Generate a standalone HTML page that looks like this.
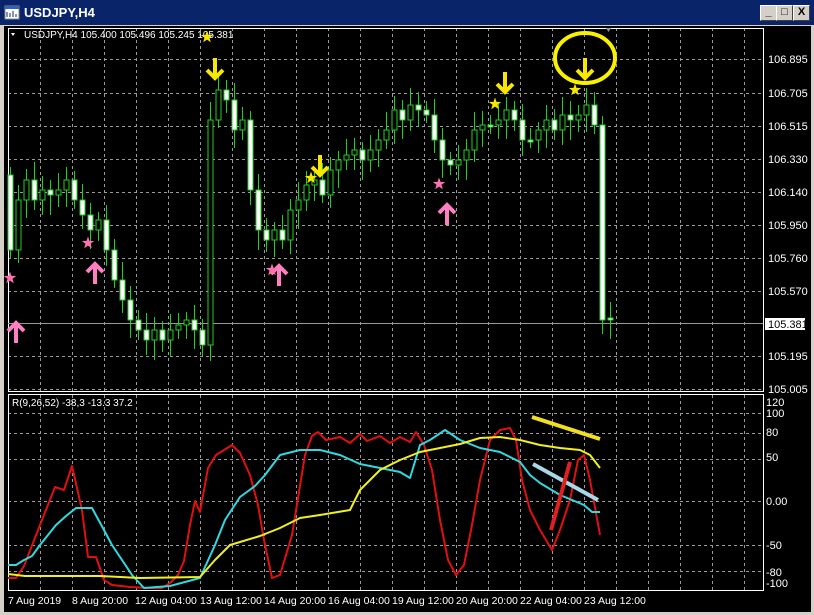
<!DOCTYPE html>
<html><head><meta charset="utf-8"><style>
body{margin:0;width:814px;height:615px;background:#d4d0c8;overflow:hidden;font-family:"Liberation Sans","DejaVu Sans",sans-serif}
#title{position:absolute;left:0;top:0;width:814px;height:25px;background:#0a246a;color:#fff;font-size:13px;font-weight:bold}
#title span{position:absolute;left:24px;top:5px}
.btn{position:absolute;top:5px;width:15px;height:14px;background:#d4d0c8;border:1px solid;border-color:#fff #404040 #404040 #fff;color:#000;font-size:11px;line-height:13px;text-align:center;font-weight:bold}
svg{position:absolute;left:0;top:0}
</style></head><body>
<div id="title"><svg width="18" height="16" style="left:4px;top:5px"><rect x="1" y="1" width="14" height="13" fill="#fff" stroke="#888"/><rect x="1" y="1" width="14" height="3" fill="#3060c0"/><path d="M3 12V7M6 12V8M9 12V6M12 12V9" stroke="#0a246a"/></svg><span>USDJPY,H4</span>
<div class="btn" style="left:760px">_</div><div class="btn" style="left:776px">□</div><div class="btn" style="left:793px">X</div></div>
<svg id="c" width="814" height="615">
<rect x="4" y="26" width="807" height="586" fill="#000"/>
<g id="grid" stroke="#9a9a9a" stroke-dasharray="3,3" stroke-width="1"></g>
<rect x="8.5" y="28.5" width="755" height="363" fill="none" stroke="#fff"/>
<rect x="8.5" y="394.5" width="755" height="196" fill="none" stroke="#fff"/>
<line x1="8" y1="323.5" x2="763" y2="323.5" stroke="#999"/>
<g id="cand"></g>
<g fill="#fff" font-size="11" font-family="Liberation Sans,sans-serif">
<text x="768" y="63">106.895</text><text x="768" y="97">106.705</text><text x="768" y="130">106.515</text><text x="768" y="163">106.330</text><text x="768" y="196">106.140</text><text x="768" y="229">105.950</text><text x="768" y="262">105.760</text><text x="768" y="295">105.570</text><text x="768" y="360">105.195</text><text x="768" y="393">105.005</text>
<rect x="765" y="318" width="40" height="12" fill="#fff"/><text x="768" y="328" fill="#000">105.381</text>
<text x="766" y="406">120</text><text x="766" y="417">100</text><text x="766" y="436">80</text><text x="766" y="461">50</text><text x="766" y="505">0.00</text><text x="766" y="549">-50</text><text x="766" y="576">-80</text><text x="766" y="587">-100</text>
<text x="24" y="38" font-size="10">USDJPY,H4  105.400 105.496 105.245 105.381</text>
<text x="12" y="406" font-size="10">R(9,26,52) -38,3 -13.3 37.2</text>
<g font-size="10.5">
<text x="8" y="604">7 Aug 2019</text><text x="72" y="604">8 Aug 20:00</text><text x="135" y="604">12 Aug 04:00</text><text x="200" y="604">13 Aug 12:00</text><text x="264" y="604">14 Aug 20:00</text><text x="328" y="604">16 Aug 04:00</text><text x="392" y="604">19 Aug 12:00</text><text x="456" y="604">20 Aug 20:00</text><text x="520" y="604">22 Aug 04:00</text><text x="584" y="604">23 Aug 12:00</text>
</g></g>
<path d="M11 33l4 0-2 3z" fill="#fff"/>
<path d="M606 28l5 0-2.5 4z" fill="#8899aa"/>
<g fill="none" stroke-width="2" stroke-linejoin="round">
<polyline stroke="#e01010" points="8,578 16,578 24,566 40,525 55,487 64,490 72,466 82,510 88,557 96,557 104,580 112,585 130,587 150,588 162,588 170,583 178,575 184,561 190,525 195,501 200,512 208,468 216,455 232,445 240,453 250,475 258,505 264,540 272,578 280,575 292,535 305,455 312,436 318,432 326,440 340,437 350,443 360,434 367,441 380,436 390,443 400,437 410,442 416,432 424,445 432,470 440,520 448,560 456,575 464,565 472,525 480,480 490,440 500,430 510,428 516,440 522,480 530,510 540,530 552,550 560,530 570,500 578,460 584,455 590,480 600,535"/>
<polyline stroke="#30d8e0" points="8,565 16,565 24,560 32,556 40,545 48,535 56,525 66,516 76,508 92,508 104,530 112,545 122,560 132,575 144,588 170,586 200,578 215,545 225,520 240,497 255,486 265,475 280,455 300,450 320,450 340,455 360,464 380,468 400,472 410,478 420,445 430,440 445,430 460,440 480,448 500,452 520,462 530,475 540,483 560,495 572,500 584,505 592,512 600,512"/>
<polyline stroke="#f0f020" points="8,574 25,576 100,576 140,578 200,577 215,560 230,545 240,542 260,536 280,528 300,518 320,515 350,510 360,490 380,470 400,460 420,452 440,448 460,444 480,438 500,437 520,440 540,445 560,448 580,450 590,455 600,468"/>
</g>
<line x1="532" y1="417" x2="600" y2="439" stroke="#f0e020" stroke-width="4"/>
<line x1="533" y1="464" x2="598" y2="500" stroke="#a8d8e8" stroke-width="4"/>
<line x1="551" y1="530" x2="570" y2="462" stroke="#e02020" stroke-width="4"/>
<ellipse cx="585" cy="58" rx="30" ry="25" fill="none" stroke="#f8f000" stroke-width="4"/>
<g id="marks"></g>
</svg>
<script>
const NS="http://www.w3.org/2000/svg";
function el(p,t,a){const e=document.createElementNS(NS,t);for(const k in a)e.setAttribute(k,a[k]);p.appendChild(e);return e;}
const g=document.getElementById('grid');
[59,93,126,159,192,225,258,291,356,389,413,433,459,501,545,571].forEach(y=>el(g,'line',{x1:8,x2:763,y1:y+.5,y2:y+.5}));
for(let x=40;x<763;x+=32){el(g,'line',{x1:x+.5,x2:x+.5,y1:28,y2:391});el(g,'line',{x1:x+.5,x2:x+.5,y1:395,y2:590});}
const ys=[250,200,180,200,190,195,190,180,200,215,230,220,250,280,300,320,330,340,330,340,330,325,320,330,345,120,90,100,130,120,190,230,240,230,240,210,200,185,180,195,170,160,155,150,160,150,140,130,110,120,105,110,115,140,160,165,160,150,130,125,125,120,110,120,140,140,130,120,130,115,120,115,105,125,320,320];
const c=document.getElementById('cand');let prev=175;
ys.forEach((y,i)=>{const x=10+i*8;let o=prev;if(i==ys.length-1)o=318;
 const top=Math.min(o,y),bot=Math.max(o,y);const hi=top-8-(i*7%11),lo=bot+8+(i*5%13);
 el(c,'line',{x1:x+.5,x2:x+.5,y1:hi,y2:lo,stroke:'#20d020'});
 el(c,'rect',{x:x-2,y:top,width:5,height:Math.max(bot-top,2),fill:y<o?'#000':'#fff',stroke:'#20d020'});prev=y;});
const m=document.getElementById('marks');
function star(x,y,col){let p='';for(let k=0;k<10;k++){const r=k%2?2.6:6.5,a=Math.PI/5*k-Math.PI/2;p+=(x+r*Math.cos(a)).toFixed(1)+','+(y+r*Math.sin(a)).toFixed(1)+' ';}el(m,'polygon',{points:p,fill:col});}
function down(x,y){el(m,'path',{d:`M${x} ${y+10}L${x} ${y-10}M${x-8} ${y+2}L${x} ${y+10}L${x+8} ${y+2}`,stroke:'#f8e800','stroke-width':4,fill:'none'});}
function up(x,y){el(m,'path',{d:`M${x} ${y-10}L${x} ${y+10}M${x-8} ${y-2}L${x} ${y-10}L${x+8} ${y-2}`,stroke:'#ff80c0','stroke-width':4,fill:'none'});}
[[215,68],[320,165],[505,82],[585,68]].forEach(a=>down(...a));
[[16,333],[95,274],[279,276],[447,215]].forEach(a=>up(...a));
[[207,37],[311,178],[495,104],[575,90]].forEach(a=>star(a[0],a[1],'#f8e800'));
[[10,278],[88,243],[272,270],[439,184]].forEach(a=>star(a[0],a[1],'#ff70b0'));
</script>
</body></html>
